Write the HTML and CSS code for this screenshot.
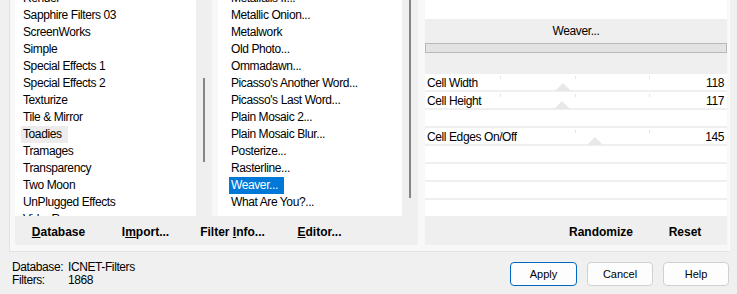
FILE: index.html
```html
<!DOCTYPE html>
<html lang="en">
<head>
<meta charset="utf-8">
<title>Filters Unlimited</title>
<link rel="stylesheet" href="styles.css">
</head>
<body>
<div class="dialog">
  <div class="frame">
    <div class="left">
      <div class="lists">
        <div class="listbox lb1">
          <ul class="items">
            <li><span>Render</span></li>
            <li><span>Sapphire Filters 03</span></li>
            <li><span>ScreenWorks</span></li>
            <li><span>Simple</span></li>
            <li><span>Special Effects 1</span></li>
            <li><span>Special Effects 2</span></li>
            <li><span>Texturize</span></li>
            <li><span>Tile &amp; Mirror</span></li>
            <li><span class="sel-inactive">Toadies</span></li>
            <li><span>Tramages</span></li>
            <li><span>Transparency</span></li>
            <li><span>Two Moon</span></li>
            <li><span>UnPlugged Effects</span></li>
            <li><span>VideoRave</span></li>
          </ul>
          <div class="vscroll"><div class="thumb thumb1"></div></div>
        </div>
        <div class="listbox lb2">
          <ul class="items">
            <li><span>Metalfalls II...</span></li>
            <li><span>Metallic Onion...</span></li>
            <li><span>Metalwork</span></li>
            <li><span>Old Photo...</span></li>
            <li><span>Ommadawn...</span></li>
            <li><span>Picasso's Another Word...</span></li>
            <li><span>Picasso's Last Word...</span></li>
            <li><span>Plain Mosaic 2...</span></li>
            <li><span>Plain Mosaic Blur...</span></li>
            <li><span>Posterize...</span></li>
            <li><span>Rasterline...</span></li>
            <li><span class="sel-active">Weaver...</span></li>
            <li><span>What Are You?...</span></li>
          </ul>
          <div class="vscroll"><div class="thumb thumb2"></div></div>
        </div>
      </div>
      <div class="cmdbar">
        <button class="cmd"><u>D</u>atabase</button>
        <button class="cmd">I<u>m</u>port...</button>
        <button class="cmd">Filter <u>I</u>nfo...</button>
        <button class="cmd"><u>E</u>ditor...</button>
      </div>
    </div>
    <div class="right">
      <div class="topwhite"></div>
      <div class="header">
        <div class="title">Weaver...</div>
        <div class="progress"></div>
      </div>
      <div class="sliders">
        <div class="row">
          <span class="tick t1"></span><span class="tick t2"></span><span class="tick t3"></span>
          <span class="thumbtri" style="left: 129.8px"></span>
          <span class="label">Cell Width</span><span class="value">118</span>
        </div>
        <div class="row">
          <span class="tick t1"></span><span class="tick t2"></span><span class="tick t3"></span>
          <span class="thumbtri" style="left: 128.7px"></span>
          <span class="label">Cell Height</span><span class="value">117</span>
        </div>
        <div class="row"></div>
        <div class="row">
          <span class="tick t1"></span><span class="tick t2"></span><span class="tick t3"></span>
          <span class="thumbtri" style="left: 161.5px"></span>
          <span class="label">Cell Edges On/Off</span><span class="value">145</span>
        </div>
        <div class="row"></div>
        <div class="row"></div>
        <div class="row"></div>
        <div class="row"></div>
      </div>
      <div class="cmdbar rbar">
        <button class="cmd rcmd">Randomize</button>
        <button class="cmd rcmd">Reset</button>
      </div>
    </div>
  </div>
  <div class="footer">
    <div class="status">
      <span>Database:</span><span>ICNET-Filters</span>
      <span>Filters:</span><span>1868</span>
    </div>
    <div class="buttons">
      <button class="btn default">Apply</button>
      <button class="btn">Cancel</button>
      <button class="btn">Help</button>
    </div>
  </div>
</div>
</body>
</html>
```

FILE: styles.css
```css
html, body {
  margin: 0;
  padding: 0;
}
body {
  background: #f0f0f0;
  width: 737px;
  height: 294px;
  overflow: hidden;
  font-family: "Liberation Sans", Arial, sans-serif;
  font-size: 12px;
  letter-spacing: -0.4px;
  color: #000;
}
.dialog {
  display: flex;
  flex-direction: column;
}
.frame {
  margin-left: 9px;
  width: 721px;
  height: 252px;
  box-sizing: border-box;
  background: #f8f8f8;
  border-left: 1px solid #e2e2e2;
  border-right: 1px solid #fcfcfc;
  border-bottom: 1px solid #e2e2e2;
  padding: 0 5px 6px 5px;
  display: grid;
  grid-template-columns: 403px 299px;
  column-gap: 7px;
}
.left {
  display: grid;
  grid-template-rows: 216px 29px;
}
.lists {
  display: grid;
  grid-template-columns: 197px 200px;
  column-gap: 6px;
}
.listbox {
  display: flex;
  background: #fff;
  overflow: hidden;
}
.items {
  flex: 1;
  list-style: none;
  margin: -10px 0 0 0;
  padding: 0;
}
.lb1 .items { padding-left: 6px; }
.lb2 .items { padding-left: 11px; }
.items li {
  height: 17px;
  line-height: 17px;
  white-space: nowrap;
}
.items li span {
  display: inline-block;
  padding: 0 6px 0 2px;
  height: 17px;
}
.items .sel-inactive {
  background: #ececec;
}
.items .sel-active {
  background: #0078d7;
  color: #fff;
}
.vscroll {
  width: 16px;
  flex: none;
  background: #efefef;
}
.thumb {
  width: 2px;
  margin-left: 7px;
  background: #858585;
}
.thumb1 {
  margin-top: 78px;
  height: 84px;
}
.thumb2 {
  margin-top: 0;
  height: 198px;
}
.cmdbar {
  display: flex;
  background: #efefef;
}
.cmd {
  width: 87px;
  border: 0;
  margin: 0;
  padding: 4px 0 0 0;
  background: transparent;
  font-family: "Liberation Sans", Arial, sans-serif;
  font-weight: bold;
  font-size: 12px;
  letter-spacing: 0;
  line-height: 25px;
  color: #000;
  text-align: center;
  height: 29px;
}
.rbar {
  padding-left: 134px;
}
.rcmd {
  width: 84px;
}
.right {
  display: grid;
  grid-template-rows: 19px 55px 142px 29px;
}
.topwhite {
  background: #fff;
}
.header {
  background: #efefef;
  padding-top: 4px;
}
.title {
  text-align: center;
  line-height: 16px;
  height: 16px;
}
.progress {
  margin-top: 4px;
  height: 10px;
  box-sizing: border-box;
  border: 1px solid #b9b9b9;
  background: #e3e3e3;
}
.sliders {
  display: grid;
  grid-auto-rows: 16px;
  row-gap: 2px;
  background: #efefef;
}
.row {
  position: relative;
  background: #fff;
  display: flex;
  justify-content: space-between;
  padding: 1px 3px 0 2px;
  line-height: 16px;
  height: 16px;
  box-sizing: border-box;
  white-space: nowrap;
}
.label, .value {
  position: relative;
  z-index: 1;
}
.tick {
  position: absolute;
  top: 2px;
  width: 1px;
  height: 3px;
  background: #e4e4e4;
}
.t1 { left: 75px; }
.t2 { left: 150px; }
.t3 { left: 224px; }
.thumbtri {
  position: absolute;
  bottom: -1px;
  width: 0;
  height: 0;
  border-left: 8.5px solid transparent;
  border-right: 8.5px solid transparent;
  border-bottom: 8px solid #e8e8e8;
}
.footer {
  height: 42px;
  display: flex;
  justify-content: space-between;
  padding: 0 8px 0 12px;
}
.status {
  padding-top: 9px;
  display: grid;
  grid-template-columns: 56px auto;
  grid-auto-rows: 13px;
  line-height: 13px;
  align-content: start;
}
.buttons {
  display: flex;
  gap: 10px;
  padding-top: 10px;
}
.btn {
  width: 66px;
  height: 24px;
  box-sizing: border-box;
  background: #fdfdfd;
  border: 1px solid #d0d0d0;
  border-radius: 4px;
  font-family: "Liberation Sans", Arial, sans-serif;
  font-size: 11px;
  letter-spacing: 0;
  color: #000;
  padding: 0;
}
.btn.default {
  width: 67px;
  border-color: #0067c0;
}
```
